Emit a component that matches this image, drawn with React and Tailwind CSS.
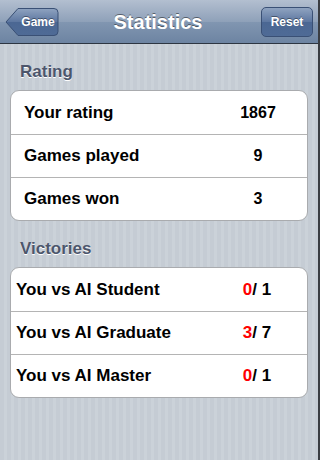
const ratingRows = [
  ["Your rating", "1867"],
  ["Games played", "9"],
  ["Games won", "3"],
];

const victoryRows = [
  ["You vs AI Student", "0", "1"],
  ["You vs AI Graduate", "3", "7"],
  ["You vs AI Master", "0", "1"],
];

function BackButton() {
  return (
    <div className="relative w-[54px] h-[30px]">
      <svg className="absolute inset-0" width="54" height="30" viewBox="0 0 54 30">
        <defs>
          <linearGradient id="bb" x1="0" y1="0" x2="0" y2="1">
            <stop offset="0" stopColor="#8fa3c0" />
            <stop offset="0.5" stopColor="#5c76a0" />
            <stop offset="0.51" stopColor="#4b6793" />
            <stop offset="1" stopColor="#4f6b96" />
          </linearGradient>
        </defs>
        <path d="M1 15 L13 1.5 H49 Q53 1.5 53 5.5 V24.5 Q53 28.5 49 28.5 H13 Z" fill="url(#bb)" stroke="#3a5075" strokeWidth="1" />
      </svg>
      <span className="absolute inset-0 pl-[12px] flex items-center justify-center text-[12px] font-bold text-white [text-shadow:0_-1px_0_rgba(0,0,0,0.4)]">
        Game
      </span>
    </div>
  );
}

function Group({ children }) {
  return (
    <div className="mx-[10px] bg-white rounded-[9px] border border-[#a9abae] overflow-hidden">
      {children}
    </div>
  );
}

export default function App() {
  return (
    <div className="w-[320px] h-[460px] flex flex-col overflow-hidden border-r-2 border-[#3a3d42] font-['Liberation_Sans',Arial,sans-serif] bg-[repeating-linear-gradient(90deg,#c5ccd4_0px,#c5ccd4_4px,#cbd2d9_4px,#cbd2d9_7px)]">
      <div className="h-[44px] shrink-0 flex items-center justify-between px-[5px] border-b border-[#2d3642] bg-[linear-gradient(#b3bfd0,#8fa1b9_50%,#8196b1_51%,#6d84a2)]">
        <BackButton />
        <span className="text-[20px] font-bold text-white [text-shadow:0_-1px_0_rgba(0,0,0,0.45)] -ml-[4px]">
          Statistics
        </span>
        <div className="w-[52px] h-[30px] rounded-[5px] border border-[#3a5075] flex items-center justify-center text-[12px] font-bold text-white [text-shadow:0_-1px_0_rgba(0,0,0,0.4)] bg-[linear-gradient(#8fa3c0,#5c76a0_50%,#4b6793_51%,#4f6b96)]">
          Reset
        </div>
      </div>

      <div className="pt-[18px] pl-[20px] pb-[8px] text-[17px] font-bold text-[#4c566c] [text-shadow:0_1px_0_#fff] leading-[20px]">
        Rating
      </div>
      <Group>
        {ratingRows.map(([label, value], i) => (
          <div
            key={label}
            className={`h-[43px] flex items-center text-[17px] font-bold text-black ${i > 0 ? "border-t border-[#b4b4b4]" : ""}`}
          >
            <span className="pl-[13px] flex-1">{label}</span>
            <span className="w-[80px] mr-[9px] text-center text-[16px]">{value}</span>
          </div>
        ))}
      </Group>

      <div className="pt-[18px] pl-[20px] pb-[8px] text-[17px] font-bold text-[#4c566c] [text-shadow:0_1px_0_#fff] leading-[20px]">
        Victories
      </div>
      <Group>
        {victoryRows.map(([label, won, total], i) => (
          <div
            key={label}
            className={`h-[43px] flex items-center text-[17px] font-bold text-black ${i > 0 ? "border-t border-[#b4b4b4]" : ""}`}
          >
            <span className="pl-[5px] flex-1">{label}</span>
            <span className="w-[80px] mr-[10px] text-center text-[17px]">
              <span className="text-[#ff0000]">{won}</span>/ {total}
            </span>
          </div>
        ))}
      </Group>
    </div>
  );
}
